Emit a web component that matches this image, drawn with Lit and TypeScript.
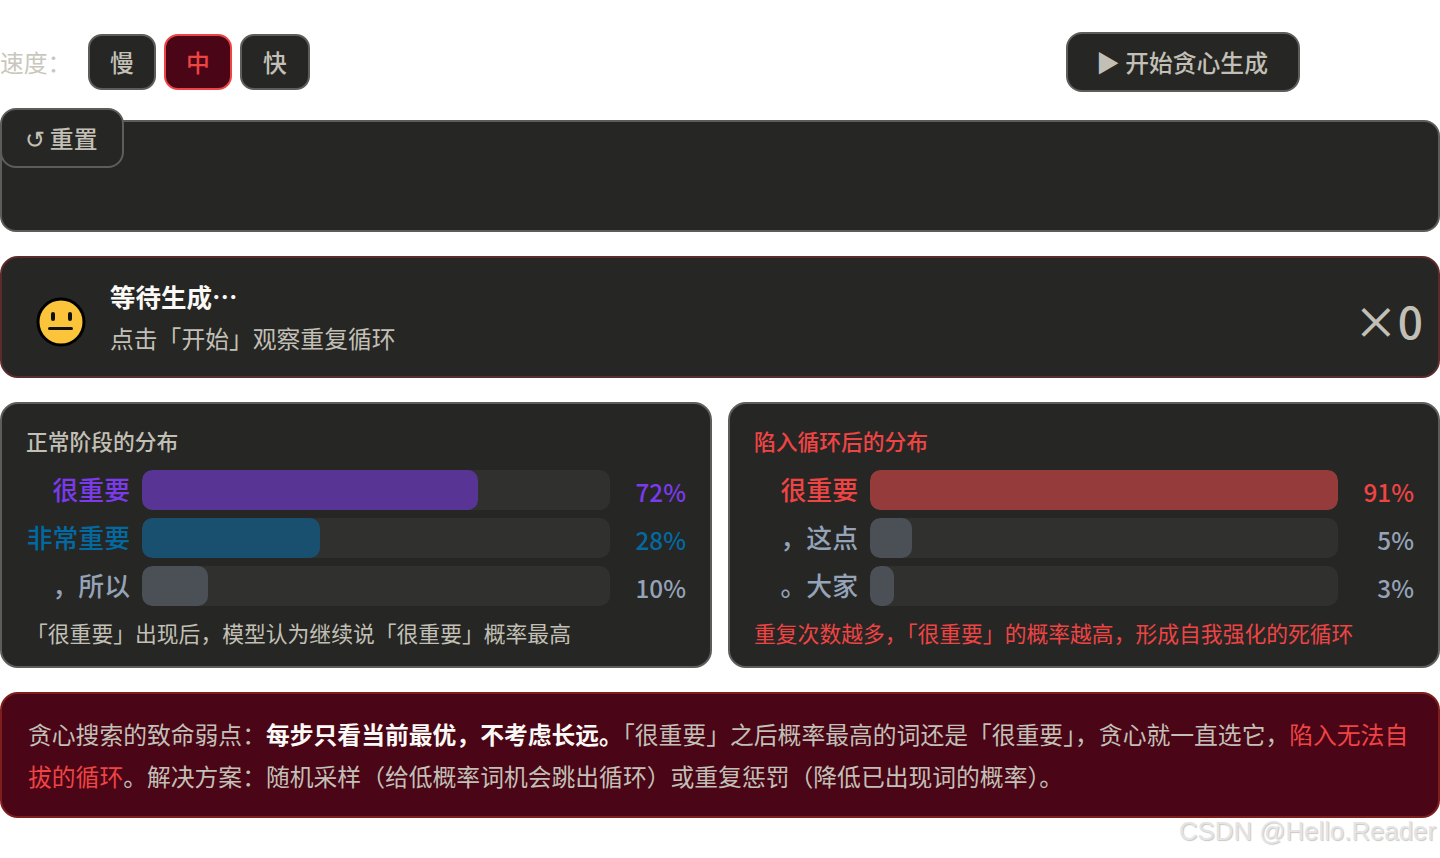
import { LitElement, html, css } from "lit";
import { customElement } from "lit/decorators.js";

const LEFT = [
  { word: "很重要", pct: 72, color: "#7c3aed", fill: "#583594", width: 71.8 },
  { word: "非常重要", pct: 28, color: "#0369a1", fill: "#1a506f", width: 38 },
  { word: "，所以", pct: 10, color: "#94a3b8", fill: "#4b5057", width: 14 },
];

const RIGHT = [
  { word: "很重要", pct: 91, color: "#ef4444", fill: "#963b3b", width: 100 },
  { word: "，这点", pct: 5, color: "#94a3b8", fill: "#4b5057", width: 9 },
  { word: "。大家", pct: 3, color: "#94a3b8", fill: "#4b5057", width: 5.2 },
];

@customElement("app-root")
export class AppRoot extends LitElement {
  static styles = css`
    :host {
      display: block;
      width: 1440px;
      height: 858px;
      overflow: hidden;
      background: #fff;
      position: relative;
      font-family: "Noto Sans CJK SC", "Noto Sans", sans-serif;
      color: #c2c0b6;
    }

    * {
      box-sizing: border-box;
    }

    button {
      font: inherit;
      color: inherit;
      background: #262624;
      border: 2px solid #5e5d59;
      margin: 0;
      padding: 0;
    }

    .controls {
      display: flex;
      align-items: center;
      height: 60px;
      margin-top: 32px;
    }

    .label {
      font-size: 23.8px;
      line-height: 60px;
      height: 60px;
      color: #c9c7bd;
      width: 88px;
      white-space: nowrap;
    }

    .speeds {
      display: flex;
      gap: 8px;
    }

    .speed {
      height: 56px;
      width: 68px;
      border-radius: 14px;
      font-size: 23.8px;
      font-weight: 500;
      padding-bottom: 2px;
    }

    .speed.wide {
      width: 70px;
    }

    .speed.on {
      background: #4a0516;
      border-color: #ef4444;
      color: #ef4444;
    }

    .start {
      margin-left: 756px;
      width: 234px;
      height: 60px;
      border-radius: 16px;
      font-size: 23.8px;
      font-weight: 500;
      padding: 0 2px 2px 0;
      text-align: center;
      white-space: nowrap;
    }

    .stage {
      position: relative;
      height: 112px;
      margin-top: 28px;
      background: #262624;
      border: 2px solid #5e5d59;
      border-radius: 16px;
    }

    .reset {
      position: absolute;
      left: -2px;
      top: -14px;
      width: 124px;
      height: 60px;
      border-radius: 16px;
      font-size: 23.8px;
      font-weight: 500;
      padding: 0 2px 2px 0;
      text-align: center;
      white-space: nowrap;
    }

    .status {
      height: 122px;
      margin-top: 24px;
      background: #262624;
      border: 2px solid #5c2b2b;
      border-radius: 18px;
      display: flex;
      align-items: center;
      padding: 0 15px 0 34px;
    }

    .face {
      margin-top: 10px;
      flex: none;
    }

    .status-text {
      margin-left: 24px;
      flex: 1;
    }

    .status-title {
      font-size: 25.5px;
      line-height: 38px;
      font-weight: 700;
      color: #faf9f5;
    }

    .status-sub {
      font-size: 23.8px;
      line-height: 40px;
      margin-top: 3px;
    }

    .count {
      font-size: 44.2px;
      line-height: 1;
      font-weight: 500;
      color: #c2c0b6;
      padding-top: 6px;
      white-space: nowrap;
    }

    .cards {
      display: grid;
      grid-template-columns: 1fr 1fr;
      gap: 16px;
      margin-top: 24px;
    }

    .card {
      height: 266px;
      background: #262624;
      border: 2px solid #5e5d59;
      border-radius: 18px;
      padding: 19px 24px 0;
    }

    .card-title {
      font-size: 21.76px;
      line-height: 36px;
      font-weight: 500;
      margin-bottom: 11px;
    }

    .row {
      display: flex;
      align-items: center;
      height: 40px;
      margin-bottom: 8px;
    }

    .word {
      width: 104px;
      margin-right: 12px;
      text-align: right;
      font-size: 25.84px;
      font-weight: 500;
      line-height: 40px;
      white-space: nowrap;
      position: relative;
      top: -1px;
    }

    .track {
      width: 468px;
      height: 40px;
      background: #30302e;
      border-radius: 10px;
      overflow: hidden;
    }

    .fill {
      height: 100%;
      border-radius: 10px;
    }

    .pct {
      flex: 1;
      text-align: right;
      font-size: 24.3px;
      line-height: 40px;
      font-weight: 500;
      position: relative;
      top: 2px;
    }

    .card-note {
      font-size: 21.8px;
      line-height: 40px;
      margin-top: -1px;
      white-space: nowrap;
    }

    .red {
      color: #ef4444;
    }

    .note {
      height: 126px;
      margin-top: 24px;
      background: #4a0516;
      border: 2px solid #7f1d1d;
      border-radius: 18px;
      padding: 19px 26px;
      font-size: 23.8px;
      line-height: 42px;
      color: #c2c0b6;
    }

    .note strong {
      color: #faf9f5;
      font-weight: 700;
    }

    .watermark {
      position: absolute;
      right: 4px;
      top: 813px;
      font-family: "Liberation Sans", sans-serif;
      font-size: 25.8px;
      line-height: 36px;
      color: #e4e4e4;
      text-shadow: 1px 1px 1px #c8c8c8;
      white-space: nowrap;
    }
  `;

  renderRows(rows: typeof LEFT) {
    return rows.map(
      (r) => html`
        <div class="row">
          <div class="word" style="color:${r.color}">${r.word}</div>
          <div class="track">
            <div class="fill" style="width:${r.width}%;background:${r.fill}"></div>
          </div>
          <div class="pct" style="color:${r.color}">${r.pct}%</div>
        </div>
      `
    );
  }

  render() {
    return html`
      <div class="controls">
        <div class="label">速度：</div>
        <div class="speeds">
          <button class="speed">慢</button>
          <button class="speed on">中</button>
          <button class="speed wide">快</button>
        </div>
        <button class="start">▶ 开始贪心生成</button>
      </div>

      <div class="stage">
        <button class="reset">↺ 重置</button>
      </div>

      <div class="status">
        <svg class="face" width="50" height="50" viewBox="0 0 50 50">
          <circle cx="25" cy="25" r="23" fill="#fcc43a" stroke="#000" stroke-width="3" />
          <rect x="15" y="15" width="4" height="9" rx="2" fill="#111" />
          <rect x="32" y="15" width="4" height="9" rx="2" fill="#111" />
          <rect x="12" y="30" width="25" height="3" rx="1.5" fill="#111" />
        </svg>
        <div class="status-text">
          <div class="status-title">等待生成⋯</div>
          <div class="status-sub">点击「开始」观察重复循环</div>
        </div>
        <div class="count">×0</div>
      </div>

      <div class="cards">
        <div class="card">
          <div class="card-title">正常阶段的分布</div>
          ${this.renderRows(LEFT)}
          <div class="card-note">「很重要」出现后，模型认为继续说「很重要」概率最高</div>
        </div>
        <div class="card">
          <div class="card-title red">陷入循环后的分布</div>
          ${this.renderRows(RIGHT)}
          <div class="card-note red">重复次数越多，「很重要」的概率越高，形成自我强化的死循环</div>
        </div>
      </div>

      <div class="note">
        贪心搜索的致命弱点：<strong>每步只看当前最优，不考虑长远。</strong>「很重要」之后概率最高的词还是「很重要」，贪心就一直选它，<span class="red">陷入无法自拔的循环</span>。解决方案：随机采样（给低概率词机会跳出循环）或重复惩罚（降低已出现词的概率）。
      </div>

      <div class="watermark">CSDN @Hello.Reader</div>
    `;
  }
}
